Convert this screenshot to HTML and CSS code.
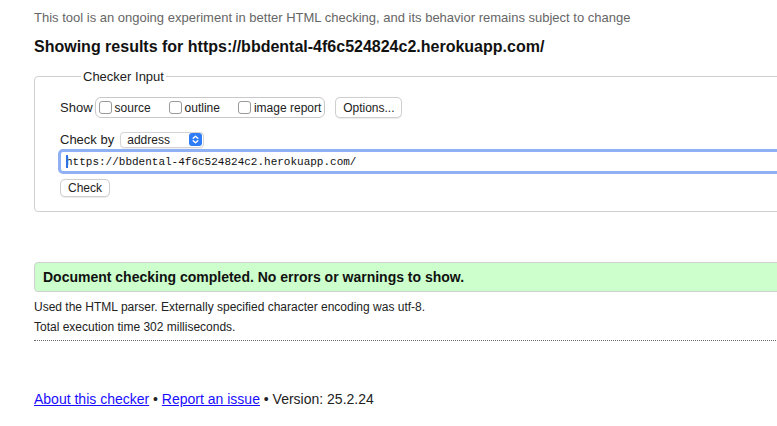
FILE: index.html
```html
<!DOCTYPE html>
<html lang="en">
<head>
<meta charset="utf-8">
<title>Nu Html Checker</title>
<link rel="stylesheet" href="styles.css">
</head>
<body>
<div class="page">
  <p class="note">This tool is an ongoing experiment in better HTML checking, and its behavior remains subject to change</p>
  <h2 class="title">Showing results for https://bbdental-4f6c524824c2.herokuapp.com/</h2>

  <fieldset class="checker">
    <legend>Checker Input</legend>
    <div class="row show-row">
      <span class="label">Show</span>
      <span class="group">
        <label class="opt"><span class="cb"></span>source</label>
        <label class="opt"><span class="cb"></span>outline</label>
        <label class="opt"><span class="cb"></span>image report</label>
      </span>
      <span class="btn options">Options...</span>
    </div>
    <div class="row by-row">
      <span class="label">Check by</span>
      <span class="select">
        <span class="sel-text">address</span>
        <span class="stepper">
          <svg width="13" height="13" viewBox="0 0 13 13"><path d="M4.2 5.3 L6.5 3.2 L8.8 5.3 M4.2 7.7 L6.5 9.8 L8.8 7.7" fill="none" stroke="#fff" stroke-width="1.4" stroke-linecap="round" stroke-linejoin="round"/></svg>
        </span>
      </span>
    </div>
    <div class="url">
      <span class="caret"></span>
      <span class="url-text">https://bbdental-4f6c524824c2.herokuapp.com/</span>
    </div>
    <div class="row">
      <span class="btn check">Check</span>
    </div>
  </fieldset>

  <div class="success">Document checking completed. No errors or warnings to show.</div>

  <div class="details">
    <p>Used the HTML parser. Externally specified character encoding was utf-8.</p>
    <p>Total execution time 302 milliseconds.</p>
  </div>

  <p class="footer"><a href="#">About this checker</a> • <a href="#">Report an issue</a> • Version: 25.2.24</p>
</div>
</body>
</html>
```

FILE: styles.css
```css
html, body {
  margin: 0;
  padding: 0;
  overflow: hidden;
  background: #fff;
}
body {
  font-family: "Liberation Sans", Arial, Helvetica, sans-serif;
  color: #222;
}
.page {
  margin-left: 34px;
  width: 820px;
}
.note {
  margin: 0;
  padding-top: 10px;
  font-size: 13px;
  line-height: 15px;
  color: #666;
}
.title {
  margin: 12px 0 0;
  font-size: 16px;
  line-height: 19px;
  font-weight: bold;
  color: #111;
}
.checker {
  margin: 13px 0 0;
  padding: 4px 24px 14px 25px;
  border: 1px solid #cfcfcf;
  border-radius: 4px;
  font-size: 13px;
}
.checker legend {
  margin-left: 21px;
  padding: 0 2px;
  font-size: 13px;
  line-height: 15px;
  color: #222;
}
.row {
  display: flex;
  align-items: center;
}
.show-row {
  height: 21px;
  margin-top: 9px;
}
.label {
  font-size: 13px;
  color: #222;
  margin-right: 3px;
}
.show-row .label {
  margin-right: 2px;
}
.group {
  display: flex;
  align-items: center;
  height: 19px;
  border: 1px solid #c8c8c8;
  border-radius: 6px;
  padding: 0 3px 0 3px;
}
.opt {
  display: flex;
  align-items: center;
  font-size: 12px;
  color: #222;
  margin-right: 18px;
}
.opt:last-child {
  margin-right: 0;
}
.cb {
  width: 11px;
  height: 11px;
  border: 1px solid #9a9a9a;
  border-radius: 3px;
  margin-right: 3px;
  background: #fff;
}
.btn {
  display: inline-flex;
  align-items: center;
  justify-content: center;
  box-sizing: border-box;
  border: 1px solid #cfcfcf;
  border-radius: 5px;
  background: #fff;
  font-size: 12px;
  color: #222;
  box-shadow: 0 0.5px 1px rgba(0,0,0,0.08);
}
.options {
  margin-left: 10px;
  height: 21px;
  width: 67px;
}
.by-row {
  margin-top: 13px;
  height: 17px;
}
.by-row .label {
  margin-right: 6px;
}
.select {
  display: flex;
  align-items: center;
  justify-content: space-between;
  box-sizing: border-box;
  width: 84px;
  height: 16px;
  border: 1px solid #d4d4d4;
  border-radius: 4px;
  padding: 0 1px 0 6px;
  font-size: 12px;
  color: #222;
  box-shadow: 0 0.5px 1px rgba(0,0,0,0.06);
}
.stepper {
  display: flex;
  width: 13px;
  height: 13px;
  border-radius: 3px;
  background: #2f7cf6;
}
.url {
  position: relative;
  display: flex;
  align-items: center;
  margin: 1px 0 0 -2px;
  height: 19px;
  border: 3px solid #8fb0f5;
  border-radius: 5px;
  padding-left: 5px;
  font-family: "Liberation Mono", "Courier New", monospace;
  font-size: 11px;
  color: #111;
}
.caret {
  position: absolute;
  left: 5px;
  top: 3px;
  width: 2px;
  height: 13px;
  background: #2f6fe0;
}
.check {
  margin-top: 5px;
  height: 18px;
  width: 50px;
}
.success {
  margin-top: 50px;
  height: 28px;
  display: flex;
  align-items: center;
  padding-left: 8px;
  border: 1px solid #cfcfcf;
  border-radius: 4px;
  background: #ccffcc;
  font-size: 14px;
  font-weight: bold;
  color: #111;
}
.details {
  margin-top: 8px;
  padding-bottom: 6px;
  border-bottom: 1px dotted #666;
}
.details p {
  margin: 0 0 6px;
  font-size: 12px;
  line-height: 14px;
  color: #222;
}
.details p:last-child {
  margin-bottom: 0;
}
.footer {
  margin: 50px 0 0;
  font-size: 14px;
  line-height: 16px;
  color: #222;
}
.footer a {
  color: #1a0dff;
  text-decoration: underline;
}
```
